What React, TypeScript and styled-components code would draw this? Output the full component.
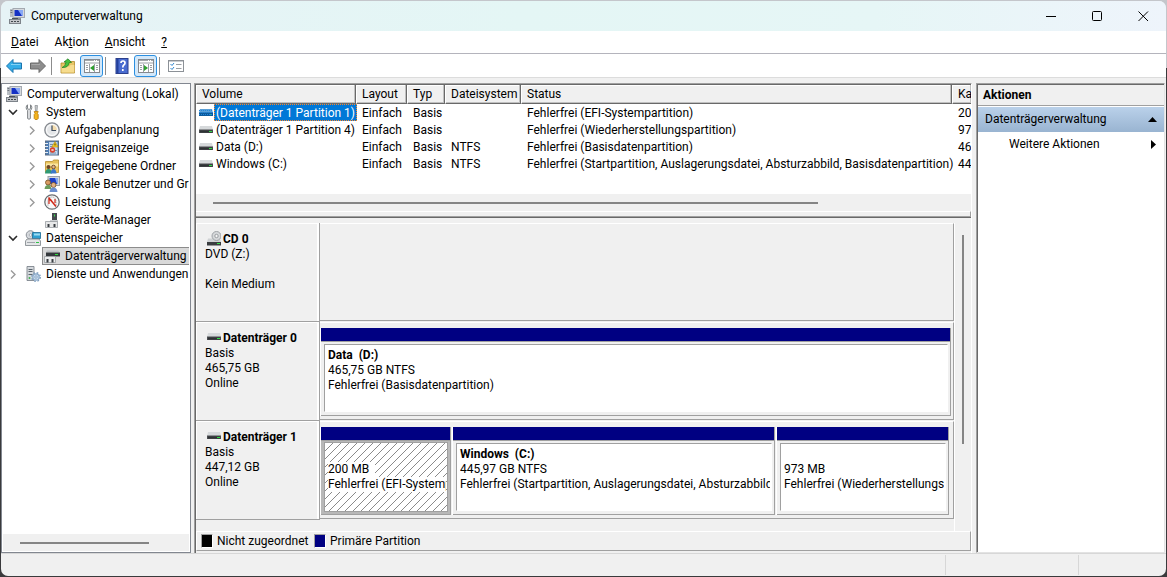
import React from "react";
import styled, { createGlobalStyle, css } from "styled-components";

const NAVY = "#000082";
const FACE = "#f0f0f0";
const SHADOW = "#a0a0a0";
const DARK = "#696969";

const GlobalStyle = createGlobalStyle`
  *, *::before, *::after { box-sizing: border-box; }
  body {
    margin: 0;
    background: linear-gradient(#c4c6cb 68px, #3a3a3c 68px) no-repeat #3a3a3c;
    color: #000;
    font: 12px/15px Roboto, "Segoe UI", sans-serif;
  }
  button { font: inherit; color: inherit; border: 0; padding: 0; background: none; text-align: left; }
  ul { list-style: none; margin: 0; padding: 0; }
  h2, h3, p { margin: 0; font-size: inherit; }
  svg { display: block; flex: none; }
`;

const Window = styled.div`
  min-height: 100vh;
  display: flex;
  flex-direction: column;
  background: ${FACE};
  background-clip: padding-box;
  border: 1px solid transparent;
  border-radius: 8px;
  overflow: hidden;
`;

/* ---------- title bar, menu, toolbar ---------- */

const TitleBar = styled.header`
  display: flex;
  align-items: center;
  height: 30px;
  padding-left: 8px;
  gap: 6px;
  background: linear-gradient(90deg, #e6f3f6, #e4f6f5 45%, #e6f6f6 75%, #eef4fb);
`;

const Title = styled.h1`
  flex: 1;
  margin: 0;
  font-size: 12px;
  font-weight: 400;
`;

const CaptionButtons = styled.div`
  display: flex;
`;

const CaptionButton = styled.button`
  width: 46px;
  height: 30px;
  display: grid;
  place-items: center;
`;

const MenuBar = styled.nav`
  display: flex;
  height: 23px;
  padding-left: 2px;
  background: #fff;
  border-bottom: 1px solid #b4b4bc;
`;

const MenuButton = styled.button`
  padding: 0 8px;
`;

const Toolbar = styled.div`
  display: flex;
  align-items: center;
  gap: 1px;
  height: 24px;
  padding-left: 1px;
  background: #fff;
  border-bottom: 1px solid #dcdcdc;
`;

const ToolButton = styled.button<{ $on?: boolean }>`
  width: 23px;
  height: 22px;
  display: grid;
  place-items: center;
  border-radius: 3px;
  ${(p) => p.$on && css`
    background: #d3e8fa;
    border: 1px solid #2b8fe0;
  `}
`;

const ToolDivider = styled.span`
  width: 1px;
  height: 18px;
  margin: 0 3px 0 1px;
  background: #8c8c8c;
`;

/* ---------- panes ---------- */

const Main = styled.main`
  flex: 1;
  display: grid;
  grid-template-columns: 190px minmax(0, 1fr) 189px;
  gap: 3px;
  padding: 5px 1px 0 0;
`;

const TreePane = styled.nav`
  display: flex;
  flex-direction: column;
  background: #fff;
  border: 1px solid #828790;
  padding: 1px;
  min-width: 0;
`;

const TreeList = styled.ul`
  flex: 1;
  overflow: hidden;
`;

const TreeRow = styled.button<{ $level: number }>`
  display: flex;
  align-items: center;
  width: 100%;
  height: 18px;
  padding-left: ${(p) => [1, 0, 19][p.$level]}px;
  white-space: nowrap;
`;

const Expander = styled.span`
  width: 20px;
  display: grid;
  place-items: center;
  flex: none;
`;

const TreeLabel = styled.span<{ $selected?: boolean }>`
  display: flex;
  align-items: center;
  flex: 1;
  gap: 5px;
  height: 18px;
  padding-left: 2px;
  ${(p) => p.$selected && css`
    background: #d9d9d9;
    box-shadow: inset 1px 1px #8c8c8c, inset 0 -1px #8c8c8c;
  `}
`;

const ScrollTrack = styled.div`
  height: 17px;
  display: grid;
  align-items: center;
  background: ${FACE};
`;

const ScrollThumb = styled.div<{ $start: string; $size: string }>`
  width: ${(p) => p.$size};
  height: 2px;
  margin-left: ${(p) => p.$start};
  background: #858585;
`;

const CenterPane = styled.section`
  display: flex;
  flex-direction: column;
  min-width: 0;
  margin-right: 1px;
  border-top: 1px solid ${SHADOW};
  border-left: 1px solid ${SHADOW};
  border-right: 1px solid #fff;
  box-shadow: inset 1px 1px ${DARK};
  padding: 1px 0 2px 1px;
`;

const VolumeArea = styled.div`
  display: flex;
  flex-direction: column;
  height: 133px;
  overflow: hidden;
  background: #fff;
  border-bottom: 1px solid ${DARK};
`;

const TableHolder = styled.div`
  flex: 1;
  overflow: hidden;
`;

const ScrollFoot = styled.div`
  height: 6px;
  background: ${FACE};
  border-top: 1px solid #fff;
  border-bottom: 1px solid ${SHADOW};
  border-right: 1px solid ${SHADOW};
`;

const VolumeTable = styled.table`
  width: 100%;
  table-layout: fixed;
  border-collapse: separate;
  border-spacing: 0;
`;

const Th = styled.th<{ $w?: number }>`
  width: ${(p) => (p.$w ? p.$w + "px" : "auto")};
  height: 19px;
  padding: 1px 0 0 5px;
  background: ${FACE};
  border-left: 1px solid #fff;
  border-right: 1px solid ${DARK};
  border-bottom: 1px solid ${DARK};
  box-shadow: inset -1px -1px #c0c0c0, inset 0 1px #fff;
  text-align: left;
  font-weight: 400;
  white-space: nowrap;
  &:last-child { border-right: 0; }
`;

const Td = styled.td`
  height: 17px;
  padding: 1px 0 0 6px;
  white-space: nowrap;
  &:first-child { padding: 0 0 0 3px; }
`;

const VolumeName = styled.div`
  display: flex;
  align-items: center;
  gap: 1px;
`;

const VolumeLabel = styled.span<{ $selected?: boolean }>`
  height: 17px;
  padding: 0 2px;
  line-height: 18px;
  ${(p) => p.$selected && css`
    flex: 1;
    color: #fff;
    background: #0078d7;
    outline: 1px dotted #ff8728;
    outline-offset: -1px;
  `}
`;

/* ---------- disk graph ---------- */

const GraphArea = styled.div`
  flex: 1;
  display: flex;
  padding-top: 5px;
`;

const DiskList = styled.div`
  flex: 1;
  min-width: 0;
  border-right: 1px solid #fff;
`;

const Disk = styled.section`
  display: flex;
  height: 99px;
`;

const DiskInfo = styled.div`
  width: 124px;
  padding: 6px 0 0 9px;
  border: 1px solid ${SHADOW};
  border-width: 0 1px 1px 0;
  box-shadow: inset 1px 1px #fff, inset -2px 0 #fff;
`;

const DiskHeading = styled.h2`
  display: flex;
  align-items: center;
  gap: 2px;
  padding-left: 2px;
  height: 18px;
`;

const DiskName = styled.span`
  align-self: flex-end;
`;

const DiskBody = styled.div<{ $inset: number }>`
  flex: 1;
  min-width: 0;
  display: flex;
  gap: 2px;
  height: 98px;
  padding: 5px ${(p) => p.$inset}px 3px 1px;
  border: 1px solid ${SHADOW};
  border-top-color: #fff;
  border-left: 0;
`;

const Partition = styled.div<{ $w?: number }>`
  flex: ${(p) => (p.$w ? `0 0 ${p.$w}px` : "1")};
  min-width: 0;
  display: flex;
  flex-direction: column;
  border: 1px solid ${SHADOW};
  border-width: 0 1px 1px 0;
  box-shadow: -1px 0 #fff;
`;

const PartitionBar = styled.div`
  height: 13px;
  background: ${NAVY};
`;

const PartitionFrame = styled.div<{ $selected?: boolean }>`
  flex: 1;
  min-height: 0;
  padding: ${(p) => (p.$selected ? "1px 2px 2px 3px" : "2px 2px 3px 3px")};
  display: flex;
  background: ${(p) => (p.$selected ? "#b8b8b8" : FACE)};
  border-top: 1px solid ${SHADOW};
`;

const PartitionBody = styled.div<{ $selected?: boolean }>`
  flex: 1;
  min-width: 0;
  overflow: hidden;
  padding: 3px 1px 0 3px;
  white-space: nowrap;
  background: #fff;
  border: 1px solid ${SHADOW};
  border-right-color: ${(p) => (p.$selected ? SHADOW : "#fff")};
  border-bottom-color: ${(p) => (p.$selected ? SHADOW : "#fff")};
  ${(p) => p.$selected && css`
    padding-top: 4px;
    background: linear-gradient(135deg, transparent 44%, #8a8a8a 44% 56%, transparent 56%) 0 0 / 8px 8px #fff;
  `}
`;

const PartitionName = styled.h3`
  height: 15px;
  white-space: pre;
`;

const PartitionLine = styled.p`
  overflow: hidden;
`;

const OnWhite = styled.span`
  background: #fff;
  display: inline-block;
  padding-right: 6px;
`;

const VScroll = styled.div`
  width: 16px;
  padding: 12px 0 0 7px;
`;

const VThumb = styled.div`
  width: 2px;
  height: 209px;
  background: #858585;
`;

const Legend = styled.div`
  display: flex;
  align-items: center;
  height: 20px;
  padding-left: 4px;
  border: 1px solid ${SHADOW};
  border-top-color: #fff;
  border-left-color: #fff;
`;

const LegendItem = styled.span`
  width: 113px;
  display: flex;
  align-items: center;
  gap: 4px;
  white-space: nowrap;
`;

const Swatch = styled.span<{ $color: string }>`
  width: 12px;
  height: 14px;
  background: ${(p) => p.$color};
  border: 1px solid ${SHADOW};
  border-right-color: #fff;
  border-bottom-color: #fff;
  flex: none;
`;

/* ---------- actions pane ---------- */

const ActionsPane = styled.aside`
  background: #fff;
  border: 1px solid ${SHADOW};
  border-right-color: #e3e3e3;
  border-bottom-color: #e3e3e3;
  box-shadow: inset 1px 1px ${DARK};
  padding: 1px 0 0 1px;
`;

const ActionsHeading = styled.h2`
  height: 21px;
  padding: 3px 5px;
  background: ${FACE};
  border-bottom: 1px solid ${SHADOW};
`;

const ActionsGroup = styled.button`
  display: flex;
  align-items: center;
  justify-content: space-between;
  width: 100%;
  height: 25px;
  margin-top: 1px;
  padding: 0 7px;
  background: linear-gradient(#bad1ea, #99b4d1);
`;

const ActionItem = styled.button`
  display: flex;
  align-items: center;
  justify-content: space-between;
  width: 100%;
  height: 24px;
  padding: 0 8px 0 31px;
`;

const StatusBar = styled.footer`
  display: flex;
  justify-content: flex-end;
  height: 23px;
  border-top: 1px solid #d7d7d7;
  padding: 1px 0;
`;

const StatusCell = styled.span<{ $w: number }>`
  width: ${(p) => p.$w}px;
  border-left: 1px solid #d7d7d7;
`;

/* ---------- icons ---------- */

const Svg = ({ children, w = 16, h = 16 }: { children: React.ReactNode; w?: number; h?: number }) => (
  <svg width={w} height={h} viewBox={`0 0 ${w} ${h}`} aria-hidden="true">{children}</svg>
);

const ComputerIcon = () => (
  <Svg>
    <path d="M1 1h3v8H1z" fill="#b9bec4" />
    <path d="M1.500 2.500h2M1.500 4.500h2" stroke="#6e757d" />
    <rect x="4" y="0.500" width="11.500" height="9" fill="#d6d9dd" stroke="#a3a9b0" />
    <rect x="5.500" y="2" width="8.500" height="6" fill="#1531c4" />
    <path d="M9 2h5v6h-1z" fill="#88a8f4" />
    <path d="M7 10h5v1.500H7z" fill="#8b9299" />
    <rect x="0.500" y="11.500" width="11" height="4" fill="#c3c6ca" stroke="#7d838a" />
    <path d="M2 13.500h2M5 13.500h2M8 13.500h2" stroke="#42484e" />
    <path d="M3 10.500h6" stroke="#4c5258" />
  </Svg>
);

const ToolsIcon = () => (
  <Svg>
    <path d="M5.500 .8v3.700l-1.500 1-1.500-1V.8C.8 2 .6 5 2.600 6.500v8q1.400 1.500 2.800 0v-8C7.400 5 7.200 2 5.500.8z" fill="#e2e4e6" stroke="#74787c" strokeWidth=".9" />
    <path d="M10 1.500h2.500l-.5 5.500h-1.500z" fill="#c6c9cc" stroke="#85898d" strokeWidth=".7" />
    <path d="M9.200 7.500h4l-.8 2 .8 1v4l-1 1h-2l-1-1v-4l.8-1z" fill="#f5b41c" stroke="#b87a08" strokeWidth=".8" />
  </Svg>
);

const ClockIcon = () => (
  <Svg>
    <circle cx="8" cy="8" r="7.200" fill="#e4e6e8" stroke="#85898f" strokeWidth="1.300" />
    <path d="M8 8V2.500A5.500 5.500 0 0 1 13.500 8z" fill="#f3dcae" />
    <circle cx="8" cy="8" r="5.500" fill="none" stroke="#fff" />
    <path d="M8 3.500v5h4" stroke="#3c4a5c" strokeWidth="1.200" fill="none" />
  </Svg>
);

const EventIcon = () => (
  <Svg>
    <rect x="1.500" y="1" width="13" height="14" fill="#4f7db3" stroke="#5b6f87" />
    <rect x="5" y="2" width="8.500" height="12.500" fill="#c3d8ee" />
    <path d="M1 3.500h3M1 6.500h3M1 9.500h3M1 12.500h3" stroke="#e8edf2" />
    <path d="M6 4.500h3M6 6.500h3M10 10.500h3M6 13h6" stroke="#7d90a6" />
    <path d="M11 1.500l3.200 5.500H7.800z" fill="#f7cf25" stroke="#b38c10" strokeWidth=".6" />
    <path d="M11 3.500v2" stroke="#5a4300" />
    <circle cx="8.500" cy="10" r="2.700" fill="#d9402c" />
    <path d="M7.500 9l2 2M9.500 9l-2 2" stroke="#fff" strokeWidth=".8" />
  </Svg>
);

const SharedFolderIcon = () => (
  <Svg>
    <path d="M1.500 3.500h7l1-1.500h5v12.500h-13z" fill="#e9c35b" stroke="#b58d2c" strokeWidth=".8" />
    <path d="M2 5.500h12v3H2z" fill="#fbe6a2" />
    <circle cx="4.500" cy="9" r="2" fill="#6c4526" />
    <path d="M1 15.500q.5-4.500 3.500-4.500t3.500 4.500z" fill="#2f9a75" />
    <circle cx="9.500" cy="9" r="1.800" fill="#e0b48b" stroke="#6c4526" strokeWidth=".9" />
    <path d="M6.500 15.500q.5-4.500 3-4.500t3 4.500z" fill="#3c78c8" />
  </Svg>
);

const UsersIcon = () => (
  <Svg>
    <rect x="4" y="0.500" width="11.500" height="9" fill="#d4d8dc" stroke="#9ba1a9" />
    <rect x="5.500" y="2" width="8.500" height="6" fill="#1c3fc8" />
    <path d="M11 2h3v6h-1z" fill="#84a8f0" />
    <circle cx="4" cy="6.500" r="2.500" fill="#d89b63" stroke="#755022" strokeWidth=".8" />
    <path d="M.5 13q.5-4 3.500-4t3.500 4z" fill="#6c9c5c" />
    <circle cx="9.500" cy="9" r="2.500" fill="#e4b183" stroke="#755022" strokeWidth=".8" />
    <path d="M5.500 16q.5-4.500 4-4.500t4 4.500z" fill="#6a8ed0" />
  </Svg>
);

const PerfIcon = () => (
  <Svg>
    <circle cx="8" cy="8" r="7.200" fill="#f8f8f8" stroke="#6a6e72" strokeWidth="1.300" />
    <path d="M4 11.500V7a4 4 0 0 1 8 0v4.500" stroke="#8b8f93" fill="none" strokeDasharray="1 1" />
    <path d="M5 10V5.500l3 1" stroke="#d02818" strokeWidth="1.200" fill="none" />
    <path d="M4.500 3.500l7.500 9" stroke="#d02818" strokeWidth="1.500" />
    <path d="M11 5v4" stroke="#d02818" strokeWidth="1.200" />
  </Svg>
);

const DeviceIcon = () => (
  <Svg>
    <path d="M8 1h5v9H8z" fill="#454a4f" />
    <path d="M10.500 2.500v2" stroke="#3be04c" />
    <path d="M6 8h8v2H6z" fill="#cdd0d3" />
    <path d="M1.500 9.500h12v6h-12z" fill="#e6e7e8" stroke="#8c9196" strokeWidth=".7" />
    <path d="M3.500 12h2v3h-2zM9.500 12h2v3h-2z" fill="#3a3e43" />
  </Svg>
);

const StorageIcon = () => (
  <Svg>
    <circle cx="5.500" cy="5" r="4.300" fill="#d5d8dc" stroke="#8a9097" />
    <circle cx="5.500" cy="5" r="1.300" fill="#fff" stroke="#8a9097" strokeWidth=".6" />
    <path d="M7.500 2.500h8v6h-8z" fill="#2f9fd0" stroke="#1b6b96" strokeWidth=".8" />
    <path d="M9 3.500h6v2H9z" fill="#9bdcf2" />
    <path d="M2 9h12l1.500 2v4.500H.5V11z" fill="#e3e5e7" stroke="#7b8187" strokeWidth=".8" />
    <path d="M2 12.500h8" stroke="#a0a5aa" />
    <path d="M11 12.500h3" stroke="#30c447" />
  </Svg>
);

const DiskMgmtIcon = () => (
  <Svg>
    <path d="M3 2.500h11l2 2H2z" fill="#bfc3c6" />
    <path d="M2 4.500h14v4H2z" fill="#35393d" />
    <path d="M11 6.500h3" stroke="#2de03e" />
    <path d="M.5 8.500h11v6H.5z" fill="#ebeced" stroke="#92969a" strokeWidth=".7" />
    <path d="M2.500 11h2v3.500h-2zM7.500 11h2v3.500h-2z" fill="#3a3e43" />
  </Svg>
);

const ServicesIcon = () => (
  <Svg>
    <path d="M2 .5h7v14H2z" fill="#d6dade" stroke="#7f868d" strokeWidth=".9" />
    <path d="M3.500 3.500h4M3.500 5.500h4M3.500 8.500h4" stroke="#5b646d" />
    <circle cx="4.500" cy="12" r="1" fill="#3bb04b" />
    <circle cx="11" cy="11" r="3.200" fill="#c9dcef" stroke="#8aa9c8" strokeWidth="1.200" />
    <circle cx="11" cy="11" r="4.300" fill="none" stroke="#7d9dbe" strokeWidth="1.300" strokeDasharray="1.700 1.700" />
    <circle cx="11" cy="11" r="1.200" fill="#fff" stroke="#6d93ba" strokeWidth=".8" />
  </Svg>
);

const DriveIcon = ({ selected }: { selected?: boolean }) => (
  <Svg w={14} h={8}>
    <path d="M1 0h12l1 4H0z" fill={selected ? "#5a9fd6" : "#d6d9db"} />
    <path d="M0 3.500h14V7H0z" fill={selected ? "#0d5a9c" : "#4a4d50"} />
    <path d="M1 5.500h12" stroke={selected ? "#0d5a9c" : "#2f3235"} strokeWidth="2" />
    <path d="M10 5.500h3" stroke={selected ? "#1dc08c" : "#2fdc44"} />
    {selected && <path d="M0 1.500h14M1 3.500h14M0 5.500h14" stroke="#1f86dc" strokeDasharray="1 1" />}
  </Svg>
);

const CdIcon = () => (
  <Svg w={14} h={15}>
    <path d="M1 7.500h12l1 3.500H0z" fill="#cfd2d4" />
    <circle cx="9.500" cy="5" r="4.500" fill="#d6d8da" stroke="#9ea2a6" />
    <circle cx="9.500" cy="5" r="1.700" fill="#f6f6f6" stroke="#999da1" />
    <path d="M0 11h14v3.500H0z" fill="#3a3d40" />
    <path d="M10 12.500h3" stroke="#35e34a" />
  </Svg>
);

const ArrowIcon = ({ forward }: { forward?: boolean }) => (
  <Svg>
    <path
      d={forward ? "M15.500 8L9 1.500v3.500H.5v6H9v3.500z" : "M.5 8L7 1.500v3.500h8.500v6H7v3.500z"}
      fill={forward ? "#8d8d8d" : "#35aee8"}
      stroke={forward ? "#6a6a6a" : "#1b74ae"}
    />
    <path d={forward ? "M1.500 6.500h8.500" : "M5 6.500h9.500"} stroke={forward ? "#a9a9a9" : "#84d3f6"} />
  </Svg>
);

const FolderUpIcon = () => (
  <Svg>
    <path d="M1 5h7l1-1.500h5.500v11.500H1z" fill="#e8c566" stroke="#b18a2c" strokeWidth=".8" />
    <path d="M1.500 8.500h8l1-1.500h3.800v7.500H1.500z" fill="#f6dc8e" />
    <path d="M2 9.500q3.500-1 4-5.500H4L8 .8 11.500 4.500H9.300Q8.500 10 2 9.500z" fill="#46c03e" stroke="#1d7b20" strokeWidth=".7" />
  </Svg>
);

const PaneIcon = ({ right }: { right?: boolean }) => (
  <Svg>
    <rect x=".5" y="1.500" width="15" height="13" fill="#fff" stroke="#85898e" />
    <path d="M1 2.500h14" stroke="#a4a8ac" />
    <path d="M10 2.500h1M12 2.500h1" stroke="#fff" />
    <path d="M1 5h14" stroke="#9ba0a5" />
    <path d="M5.500 6v8M10.500 6v8" stroke="#9ba0a5" />
    <path d="M2 7.500h2M2 9.500h2M2 11.500h2M12 7.500h2M12 9.500h2M12 11.500h2" stroke="#9ba0a5" />
    <path d={right ? "M6 7l4 3-4 3z" : "M10 7l-4 3 4 3z"} fill="#2fa12f" />
  </Svg>
);

const HelpIcon = () => (
  <Svg>
    <rect x="2" y=".5" width="12" height="15" fill="#4a6cd0" stroke="#2b3f8c" />
    <path d="M2.500 1h2v14h-2z" fill="#23409a" />
    <path d="M7 5q0-2 2-2t2 2q0 1.200-1.200 2-1 .7-1 2.500M8.800 11v2" stroke="#fff" strokeWidth="1.700" fill="none" />
  </Svg>
);

const ChecklistIcon = () => (
  <Svg>
    <rect x=".5" y="2.500" width="15" height="11" fill="#fff" stroke="#8c9197" />
    <path d="M1 3.500h14" stroke="#c9ccd0" />
    <path d="M8 6.500h5.500M8 10.500h5.500" stroke="#9a9fa4" />
    <path d="M2.500 6l1.500 1.500L6 5M2.500 10l1.500 1.500L6 9" stroke="#2e86d0" fill="none" />
  </Svg>
);

const Chevron = ({ open }: { open?: boolean }) => (
  <Svg w={10} h={10}>
    <path d={open ? "M1 3l4 4 4-4" : "M3 1.500L7 5.500l-4 4"} stroke={open ? "#2b2b2b" : "#9a9a9a"} strokeWidth={open ? 1.600 : 1.400} fill="none" />
  </Svg>
);

const TriangleUp = () => <Svg w={9} h={5}><path d="M4.500 0L9 5H0z" fill="#000" /></Svg>;
const TriangleRight = () => <Svg w={5} h={9}><path d="M0 0l5 4.500L0 9z" fill="#000" /></Svg>;

/* ---------- data ---------- */

type TreeItem = { level: 0 | 1 | 2; label: string; icon: React.ReactNode; open?: boolean; leaf?: boolean; selected?: boolean };

const tree: TreeItem[] = [
  { level: 0, label: "Computerverwaltung (Lokal)", icon: <ComputerIcon /> },
  { level: 1, label: "System", icon: <ToolsIcon />, open: true },
  { level: 2, label: "Aufgabenplanung", icon: <ClockIcon /> },
  { level: 2, label: "Ereignisanzeige", icon: <EventIcon /> },
  { level: 2, label: "Freigegebene Ordner", icon: <SharedFolderIcon /> },
  { level: 2, label: "Lokale Benutzer und Gru", icon: <UsersIcon /> },
  { level: 2, label: "Leistung", icon: <PerfIcon /> },
  { level: 2, label: "Geräte-Manager", icon: <DeviceIcon />, leaf: true },
  { level: 1, label: "Datenspeicher", icon: <StorageIcon />, open: true },
  { level: 2, label: "Datenträgerverwaltung", icon: <DiskMgmtIcon />, leaf: true, selected: true },
  { level: 1, label: "Dienste und Anwendungen", icon: <ServicesIcon /> },
];

const columns: [string, number?][] = [["Volume", 160], ["Layout", 51], ["Typ", 38], ["Dateisystem", 76], ["Status", 431], ["Ka"]];

const volumes = [
  ["(Datenträger 1 Partition 1)", "Einfach", "Basis", "", "Fehlerfrei (EFI-Systempartition)", "20"],
  ["(Datenträger 1 Partition 4)", "Einfach", "Basis", "", "Fehlerfrei (Wiederherstellungspartition)", "97"],
  ["Data (D:)", "Einfach", "Basis", "NTFS", "Fehlerfrei (Basisdatenpartition)", "46"],
  ["Windows (C:)", "Einfach", "Basis", "NTFS", "Fehlerfrei (Startpartition, Auslagerungsdatei, Absturzabbild, Basisdatenpartition)", "44"],
];

type PartitionData = { name?: string; size: string; status: string; width?: number; selected?: boolean };

const disks: { name: string; cd?: boolean; lines: string[]; partitions: PartitionData[] }[] = [
  { name: "CD 0", cd: true, lines: ["DVD (Z:)", "\u00a0", "Kein Medium"], partitions: [] },
  {
    name: "Datenträger 0",
    lines: ["Basis", "465,75 GB", "Online"],
    partitions: [{ name: "Data  (D:)", size: "465,75 GB NTFS", status: "Fehlerfrei (Basisdatenpartition)" }],
  },
  {
    name: "Datenträger 1",
    lines: ["Basis", "447,12 GB", "Online"],
    partitions: [
      { size: "200 MB", status: "Fehlerfrei (EFI-Systemp", width: 130, selected: true },
      { name: "Windows  (C:)", size: "445,97 GB NTFS", status: "Fehlerfrei (Startpartition, Auslagerungsdatei, Absturzabbild," },
      { size: "973 MB", status: "Fehlerfrei (Wiederherstellungs", width: 172 },
    ],
  },
];

export default function App() {
  return (
    <>
      <GlobalStyle />
      <Window>
        <TitleBar>
          <ComputerIcon />
          <Title>Computerverwaltung</Title>
          <CaptionButtons>
            <CaptionButton aria-label="Minimieren"><Svg w={11} h={11}><path d="M0 5.500h10" stroke="#000" /></Svg></CaptionButton>
            <CaptionButton aria-label="Maximieren"><Svg w={11} h={11}><rect x=".5" y=".5" width="9" height="9" rx="1" fill="none" stroke="#000" /></Svg></CaptionButton>
            <CaptionButton aria-label="Schließen"><Svg w={11} h={11}><path d="M.5.5l9.500 9.500M10 .5l-9.500 9.500" stroke="#000" /></Svg></CaptionButton>
          </CaptionButtons>
        </TitleBar>
        <MenuBar aria-label="Menü">
          <MenuButton><u>D</u>atei</MenuButton>
          <MenuButton>Ak<u>t</u>ion</MenuButton>
          <MenuButton><u>A</u>nsicht</MenuButton>
          <MenuButton><u>?</u></MenuButton>
        </MenuBar>
        <Toolbar role="toolbar" aria-label="Werkzeuge">
          <ToolButton aria-label="Zurück"><ArrowIcon /></ToolButton>
          <ToolButton aria-label="Vorwärts"><ArrowIcon forward /></ToolButton>
          <ToolDivider />
          <ToolButton aria-label="Eine Ebene nach oben"><FolderUpIcon /></ToolButton>
          <ToolButton aria-label="Konsolenstruktur" $on><PaneIcon /></ToolButton>
          <ToolDivider />
          <ToolButton aria-label="Hilfe"><HelpIcon /></ToolButton>
          <ToolButton aria-label="Aktionsbereich" $on><PaneIcon right /></ToolButton>
          <ToolDivider />
          <ToolButton aria-label="Einstellungen"><ChecklistIcon /></ToolButton>
        </Toolbar>
        <Main>
          <TreePane aria-label="Konsolenstruktur">
            <TreeList>
              {tree.map((t) => (
                <li key={t.label}>
                  <TreeRow $level={t.level} aria-expanded={t.leaf || t.level === 0 ? undefined : !!t.open}>
                    {t.level > 0 && <Expander>{!t.leaf && <Chevron open={t.open} />}</Expander>}
                    <TreeLabel $selected={t.selected}>{t.icon}{t.label}</TreeLabel>
                  </TreeRow>
                </li>
              ))}
            </TreeList>
            <ScrollTrack><ScrollThumb $start="17px" $size="129px" /></ScrollTrack>
          </TreePane>

          <CenterPane>
            <VolumeArea>
              <TableHolder>
                <VolumeTable>
                  <thead>
                    <tr>{columns.map(([label, w]) => <Th key={label} $w={w}>{label}</Th>)}</tr>
                  </thead>
                  <tbody>
                    {volumes.map(([name, ...rest], i) => (
                      <tr key={name}>
                        <Td>
                          <VolumeName>
                            <DriveIcon selected={i === 0} />
                            <VolumeLabel $selected={i === 0}>{name}</VolumeLabel>
                          </VolumeName>
                        </Td>
                        {rest.map((cell, j) => <Td key={j}>{cell}</Td>)}
                      </tr>
                    ))}
                  </tbody>
                </VolumeTable>
              </TableHolder>
              <ScrollTrack><ScrollThumb $start="17px" $size="78%" /></ScrollTrack>
              <ScrollFoot />
            </VolumeArea>

            <GraphArea>
              <DiskList>
                {disks.map((d) => (
                  <Disk key={d.name}>
                    <DiskInfo>
                      <DiskHeading>{d.cd ? <CdIcon /> : <DriveIcon />}<DiskName>{d.name}</DiskName></DiskHeading>
                      {d.lines.map((l) => <p key={l}>{l}</p>)}
                    </DiskInfo>
                    <DiskBody $inset={d.partitions.length > 1 ? 4 : 2}>
                      {d.partitions.map((p) => (
                        <Partition key={p.size} $w={p.width}>
                          <PartitionBar />
                          <PartitionFrame $selected={p.selected}>
                            <PartitionBody $selected={p.selected}>
                              <PartitionName>{p.name}</PartitionName>
                              <PartitionLine>{p.selected ? <OnWhite>{p.size}</OnWhite> : p.size}</PartitionLine>
                              <PartitionLine>{p.selected ? <OnWhite>{p.status}</OnWhite> : p.status}</PartitionLine>
                            </PartitionBody>
                          </PartitionFrame>
                        </Partition>
                      ))}
                    </DiskBody>
                  </Disk>
                ))}
              </DiskList>
              <VScroll><VThumb /></VScroll>
            </GraphArea>

            <Legend>
              <LegendItem><Swatch $color="#000" />Nicht zugeordnet</LegendItem>
              <LegendItem><Swatch $color={NAVY} />Primäre Partition</LegendItem>
            </Legend>
          </CenterPane>

          <ActionsPane>
            <ActionsHeading>Aktionen</ActionsHeading>
            <ActionsGroup>Datenträgerverwaltung<TriangleUp /></ActionsGroup>
            <ActionItem>Weitere Aktionen<TriangleRight /></ActionItem>
          </ActionsPane>
        </Main>
        <StatusBar>
          <StatusCell $w={133} />
          <StatusCell $w={88} />
        </StatusBar>
      </Window>
    </>
  );
}
